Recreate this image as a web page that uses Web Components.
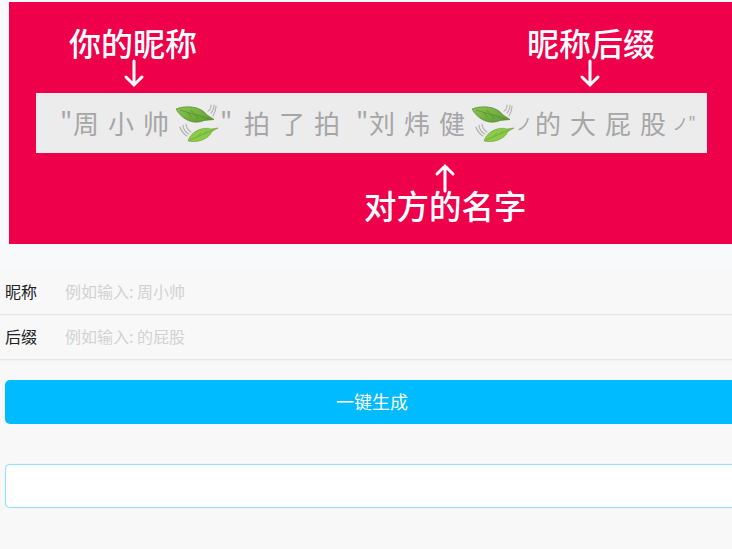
<!DOCTYPE html>
<html lang="zh">
<head>
<meta charset="utf-8">
<title>一键生成</title>
<style>
  html, body { margin: 0; height: 549px; overflow: hidden; }
  body { background: #f8f8f8; font-family: "Noto Sans CJK SC", "Liberation Sans", sans-serif; }
</style>
</head>
<body>
<pat-page>
  <pat-banner></pat-banner>
  <pat-form>
    <pat-field label="昵称" placeholder="例如输入: 周小帅"></pat-field>
    <pat-field label="后缀" placeholder="例如输入: 的屁股"></pat-field>
  </pat-form>
  <pat-button>一键生成</pat-button>
  <pat-output></pat-output>
</pat-page>

<template id="leaf-tpl">
  <style>
    :host { display: inline-block; width: 42px; height: 40px; flex: none; }
    svg { display: block; }
  </style>
  <svg width="42" height="40" viewBox="0 0 42 40" aria-hidden="true">
    <defs>
      <linearGradient id="g" x1="0" y1="0" x2="1" y2="1">
        <stop offset="0" stop-color="#8cc653"/>
        <stop offset="1" stop-color="#5a9a2e"/>
      </linearGradient>
    </defs>
    <!-- wind marks -->
    <g fill="none" stroke="#b0b0b0" stroke-width="1.1" stroke-linecap="round">
      <path d="M32 8c2-1 3-3 3-6M35 10c2-2 3-4 3-8M37 13c2-3 3-6 3-10"/>
      <path d="M10 21c0 3 2 6 5 8M7 22c0 4 3 8 6 9M4 24c1 4 4 7 7 9"/>
    </g>
    <!-- top leaf -->
    <path d="M0 6C9 2 25 3 31 12L38 16.5L28 17.5C18 22 6 17 0 6Z" fill="url(#g)" stroke="#4b7a28" stroke-width=".6"/>
    <path d="M4 7L35 16.5M12 9L15 14M19 11L22 16M15 7L18 11" fill="none" stroke="#4f8a28" stroke-width=".6"/>
    <!-- bottom leaf -->
    <path d="M35 26L42 25L36 28.500C32 37 21 40 12 38C14 30 25 23 35 26Z" fill="#8ccb4a" stroke="#5c9431" stroke-width=".5"/>
    <path d="M14 37L37 27M22 33.500L25 30M29 30.500L31 28" fill="none" stroke="#5f9f32" stroke-width=".6"/>
  </svg>
</template>

<script>
  // Page column, wider than the window like the original
  class PatPage extends HTMLElement {
    constructor() {
      super()
      this.attachShadow({ mode: 'open' }).innerHTML = `
        <style>
          :host { display: block; width: 734px; padding: 2px 0 0 5px;
            background: linear-gradient(#f8f9fb 0, #f8f9fb 270px, #f8f8f8 270px); height: 547px; }
        </style>
        <slot></slot>`
    }
  }

  class PatLeaf extends HTMLElement {
    constructor() {
      super()
      const tpl = document.getElementById('leaf-tpl')
      this.attachShadow({ mode: 'open' }).appendChild(tpl.content.cloneNode(true))
    }
  }

  // Red picture with the sample strip and the three notes over it
  class PatBanner extends HTMLElement {
    constructor() {
      super()
      this.attachShadow({ mode: 'open' }).innerHTML = `
        <style>
          :host { display: block; position: relative; width: 730px; height: 242px;
            margin-left: 4px; background: #ee004b; overflow: hidden; }
          .strip { position: absolute; left: 27px; top: 91px; width: 671px; height: 60px;
            box-sizing: border-box; padding-left: 24px; background: #ececec;
            display: flex; align-items: center; color: #a6a6a6; font-size: 26px; line-height: 1;
            font-family: "Noto Sans CJK SC", sans-serif; white-space: nowrap; }
          .strip span { flex: none; width: 26px; text-align: center; margin-right: 9px; }
          .strip .q { width: 9px; margin-right: 4px; }
          .strip .q.wide { margin-right: 15px; }
          .strip .gap { margin-right: 16px; }
          .strip .s { width: 16px; margin: 0 3px 0 0; font-size: 16px; }
          .strip .s.end { width: 24px; margin-left: -3px; }
          .strip pat-leaf { margin: 0 2px 0 -2px; }
          .note { position: absolute; color: #fff; font-size: 32px; line-height: 38px; white-space: nowrap;
            font-family: "Noto Sans CJK SC", sans-serif; font-weight: 500; }
          .note.wide { font-size: 32.500px; }
          svg { position: absolute; }
        </style>
        <div class="note" style="left:60px;top:21px">你的昵称</div>
        <div class="note" style="left:518px;top:21px">昵称后缀</div>
        <div class="note wide" style="left:355px;top:184px">对方的名字</div>
        <svg style="left:114px;top:57px" width="22" height="29" viewBox="0 0 22 29" fill="none" stroke="#fff" stroke-width="3" stroke-linecap="round">
          <path d="M11 2V26M3 18L11 26L19 18"/>
        </svg>
        <svg style="left:570px;top:57px" width="22" height="29" viewBox="0 0 22 29" fill="none" stroke="#fff" stroke-width="3" stroke-linecap="round">
          <path d="M11 2V26M3 18L11 26L19 18"/>
        </svg>
        <svg style="left:425px;top:161px" width="22" height="30" viewBox="0 0 22 30" fill="none" stroke="#fff" stroke-width="3" stroke-linecap="round">
          <path d="M11 28V3M3 11L11 3L19 11"/>
        </svg>
        <div class="strip">
          <span class="q">"</span><span>周</span><span>小</span><span>帅</span><pat-leaf></pat-leaf><span class="q wide">"</span>
          <span>拍</span><span>了</span><span class="gap">拍</span><span class="q">"</span><span>刘</span><span>炜</span><span>健</span><pat-leaf></pat-leaf>
          <span class="s">ノ</span><span>的</span><span>大</span><span>屁</span><span>股</span><span class="s end">ノ"</span>
        </div>`
    }
  }

  class PatForm extends HTMLElement {
    constructor() {
      super()
      this.attachShadow({ mode: 'open' }).innerHTML = `
        <style>
          :host { display: block; margin-top: 26px; }
        </style>
        <slot></slot>`
    }
  }

  class PatField extends HTMLElement {
    constructor() {
      super()
      this.attachShadow({ mode: 'open' })
    }
    connectedCallback() {
      this.shadowRoot.innerHTML = `
        <style>
          :host { display: flex; align-items: center; height: 42px; padding: 0 0 2px 5px;
            border-bottom: 1px solid #e6e6e6; box-shadow: 0 1px 0 #f2f2f2;
            margin-left: -5px; font-size: 16px; color: #222; }
          label { width: 60px; flex: none; }
          input { flex: 1; border: 0; outline: 0; padding: 0; background: transparent;
            font: inherit; color: #222; }
          input::placeholder { color: #d2d2d2; opacity: 1; }
        </style>
        <label>${this.getAttribute('label')}</label>
        <input type="text" placeholder="${this.getAttribute('placeholder')}">`
    }
  }

  class PatButton extends HTMLElement {
    constructor() {
      super()
      this.attachShadow({ mode: 'open' }).innerHTML = `
        <style>
          :host { display: block; margin-top: 20px; }
          button { display: block; width: 734px; height: 44px; border: 0; border-radius: 5px; padding: 0 0 2px;
            background: #00bbff; color: #fff; font: 18px "Noto Sans CJK SC", sans-serif; }
        </style>
        <button><slot></slot></button>`
    }
  }

  class PatOutput extends HTMLElement {
    constructor() {
      super()
      this.attachShadow({ mode: 'open' }).innerHTML = `
        <style>
          :host { display: block; margin-top: 40px; }
          input { display: block; box-sizing: border-box; width: 734px; height: 44px; padding: 0 10px;
            border: 1px solid #93e2ff; border-radius: 5px; background: #fff; outline: 0;
            box-shadow: 0 0 1px #a8e8ff; }
        </style>
        <input type="text">`
    }
  }

  customElements.define('pat-page', PatPage)
  customElements.define('pat-leaf', PatLeaf)
  customElements.define('pat-banner', PatBanner)
  customElements.define('pat-form', PatForm)
  customElements.define('pat-field', PatField)
  customElements.define('pat-button', PatButton)
  customElements.define('pat-output', PatOutput)
</script>
</body>
</html>
